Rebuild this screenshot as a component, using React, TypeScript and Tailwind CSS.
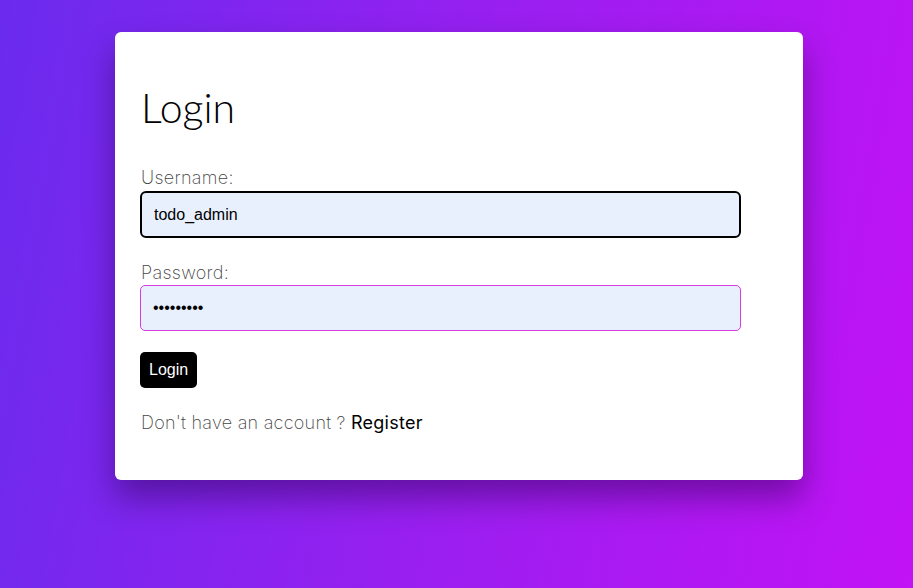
export default function App() {
  return (
    <div className="min-h-[588px] w-full bg-[linear-gradient(100deg,#6a2bee_0%,#9d1ef0_55%,#c212f5_100%)] pt-8 font-['Inter',sans-serif]">
      <div className="ml-[115px] w-[688px] h-[448px] rounded-md bg-white px-[26px] pt-[52px] shadow-[0_18px_32px_rgba(35,0,70,0.45)]">
        <h1 className="font-['Lato',sans-serif] text-[41px] leading-[48px] font-light text-black">Login</h1>
        <form className="mt-[35px]" onSubmit={(e) => e.preventDefault()}>
          <label className="block text-[18px] leading-[22px] font-extralight tracking-[0.3px] text-[#444]">Username:</label>
          <input
            type="text"
            defaultValue="todo_admin"
            className="-ml-px mt-[2px] block w-[601px] h-[47px] rounded-md border-2 border-black bg-[#e8f0fe] px-3 text-[16px] text-black font-['Liberation_Sans',Arial,sans-serif] outline-none"
          />
          <label className="mt-[24px] block text-[18px] leading-[22px] font-extralight tracking-[0.3px] text-[#444]">Password:</label>
          <input
            type="password"
            defaultValue="123456789"
            className="-ml-px mt-[1px] block w-[601px] h-[46px] rounded-[5px] border border-[#d63ce0] bg-[#e8f0fe] px-3 text-[16px] text-black font-['Liberation_Sans',Arial,sans-serif] outline-none"
          />
          <button
            type="submit"
            className="-ml-px mt-[21px] block h-9 rounded-[5px] bg-black px-[9px] text-[16px] text-white font-['Liberation_Sans',Arial,sans-serif]"
          >
            Login
          </button>
        </form>
        <p className="mt-[24px] text-[18px] leading-[22px] font-extralight tracking-[0.25px] text-[#444]">
          Don't have an account ? <a href="#" className="font-normal text-black">Register</a>
        </p>
      </div>
    </div>
  )
}
